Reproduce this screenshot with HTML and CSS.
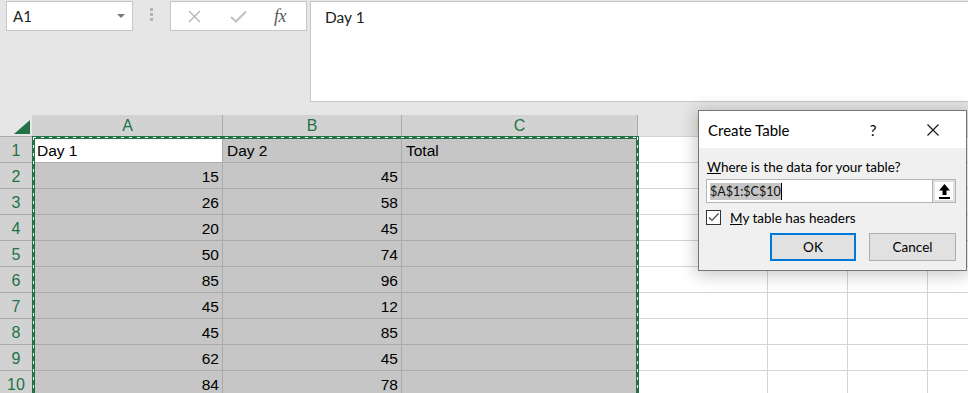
FILE: index.html
```html
<!DOCTYPE html>
<html>
<head>
<meta charset="utf-8">
<link rel="stylesheet" href="styles.css">
</head>
<body>
<div class="app">
  <div class="topbar">
    <div class="namebox"><span class="nb-text">A1</span><span class="dd"></span></div>
    <div class="grip"><i></i><i></i><i></i></div>
    <div class="fxbox">
      <svg class="ico-x" width="13" height="13" viewBox="0 0 13 13"><path d="M1 1L12 12M12 1L1 12" stroke="#b4b4b4" stroke-width="1.3" fill="none"/></svg>
      <svg class="ico-ok" width="17" height="13" viewBox="0 0 17 13"><path d="M1 7L6 11.5L16 1.5" stroke="#c2c2c2" stroke-width="2.2" fill="none"/></svg>
      <span class="fx">fx</span>
    </div>
    <div class="formula">Day 1</div>
  </div>

  <div class="sheet">
    <div class="corner"></div>
    <div class="ch s">A</div><div class="ch s">B</div><div class="ch s">C</div><div class="ch">D</div><div class="ch">E</div><div class="ch">F</div><div class="ch"></div><div class="ch"></div>

    <div class="rh">1</div><div class="c a">Day 1</div><div class="c s">Day 2</div><div class="c s">Total</div><div class="c"></div><div class="c"></div><div class="c"></div><div class="c"></div><div class="c"></div>
    <div class="rh">2</div><div class="c s n">15</div><div class="c s n">45</div><div class="c s"></div><div class="c"></div><div class="c"></div><div class="c"></div><div class="c"></div><div class="c"></div>
    <div class="rh">3</div><div class="c s n">26</div><div class="c s n">58</div><div class="c s"></div><div class="c"></div><div class="c"></div><div class="c"></div><div class="c"></div><div class="c"></div>
    <div class="rh">4</div><div class="c s n">20</div><div class="c s n">45</div><div class="c s"></div><div class="c"></div><div class="c"></div><div class="c"></div><div class="c"></div><div class="c"></div>
    <div class="rh">5</div><div class="c s n">50</div><div class="c s n">74</div><div class="c s"></div><div class="c"></div><div class="c"></div><div class="c"></div><div class="c"></div><div class="c"></div>
    <div class="rh">6</div><div class="c s n">85</div><div class="c s n">96</div><div class="c s"></div><div class="c"></div><div class="c"></div><div class="c"></div><div class="c"></div><div class="c"></div>
    <div class="rh">7</div><div class="c s n">45</div><div class="c s n">12</div><div class="c s"></div><div class="c"></div><div class="c"></div><div class="c"></div><div class="c"></div><div class="c"></div>
    <div class="rh">8</div><div class="c s n">45</div><div class="c s n">85</div><div class="c s"></div><div class="c"></div><div class="c"></div><div class="c"></div><div class="c"></div><div class="c"></div>
    <div class="rh">9</div><div class="c s n">62</div><div class="c s n">45</div><div class="c s"></div><div class="c"></div><div class="c"></div><div class="c"></div><div class="c"></div><div class="c"></div>
    <div class="rh">10</div><div class="c s n">84</div><div class="c s n">78</div><div class="c s"></div><div class="c"></div><div class="c"></div><div class="c"></div><div class="c"></div><div class="c"></div>

    <div class="marquee"></div>
  </div>

  <div class="dialog">
    <div class="dlg-title">
      <span class="dlg-name">Create Table</span>
      <span class="dlg-help">?</span>
      <span class="dlg-close"><svg width="12" height="12" viewBox="0 0 12 12"><path d="M0.5 0.5L11.5 11.5M11.5 0.5L0.5 11.5" stroke="#111" stroke-width="1.1" fill="none"/></svg></span>
    </div>
    <div class="dlg-body">
      <div class="dlg-label"><u>W</u>here is the data for your table?</div>
      <div class="dlg-input">
        <span class="sel">$A$1:$C$10</span><span class="caret"></span>
        <span class="refbtn"><span class="refin"><svg width="11" height="15" viewBox="0 0 11 15"><path d="M5.5 0L11 6.5H7.5V11H3.5V6.5H0Z" fill="#000"/><rect x="0" y="13" width="11" height="2" fill="#000"/></svg></span></span>
      </div>
      <div class="dlg-check">
        <span class="box"><svg width="13" height="13" viewBox="0 0 13 13"><path d="M2 6.5L5 9.5L11.5 2.5" stroke="#444" stroke-width="1.2" fill="none"/></svg></span>
        <span class="chk-label"><u>M</u>y table has headers</span>
      </div>
      <div class="dlg-buttons">
        <div class="btn primary">OK</div>
        <div class="btn">Cancel</div>
      </div>
    </div>
  </div>
</div>
</body>
</html>
```

FILE: styles.css
```css
* { box-sizing: border-box; }
html, body { margin: 0; padding: 0; }
body {
  width: 968px;
  height: 393px;
  overflow: hidden;
  background: #e6e6e6;
  font-family: Lato, "Noto Sans", sans-serif;
}
.app { position: relative; width: 968px; height: 393px; overflow: hidden; }

/* ---------- top bar ---------- */
.topbar {
  display: flex;
  align-items: flex-start;
  height: 115px;
  padding-top: 1px;
}
.namebox {
  margin-left: 6px;
  width: 127px;
  height: 30px;
  background: #fff;
  border: 1px solid #c6c6c6;
  display: flex;
  align-items: center;
  padding: 0 7px 0 6px;
  font-size: 15px;
  color: #222;
}
.dd {
  margin-left: auto;
  width: 0; height: 0;
  border-left: 4px solid transparent;
  border-right: 4px solid transparent;
  border-top: 4px solid #7a7a7a;
}
.grip {
  width: 37px;
  display: flex;
  flex-direction: column;
  align-items: center;
  gap: 2px;
  padding-top: 7px;
}
.grip i { display: block; width: 3px; height: 3px; background: #b3b3b3; }
.fxbox {
  width: 137px;
  height: 30px;
  background: #fff;
  border: 1px solid #c6c6c6;
  display: flex;
  align-items: center;
  padding-left: 17px;
}
.ico-x { margin-right: 29px; }
.ico-ok { margin-right: 27px; }
.fx {
  font-family: "Liberation Serif", "DejaVu Serif", serif;
  font-style: italic;
  font-size: 18px;
  color: #5a5a5a;
  letter-spacing: -0.5px;
}
.formula {
  flex: 1;
  margin-left: 3px;
  margin-right: -2px;
  height: 101px;
  background: #fff;
  border: 1px solid #c6c6c6;
  padding: 5px 14px;
  font-size: 15.5px;
  line-height: 20px;
  color: #222;
}

/* ---------- sheet ---------- */
.sheet {
  position: relative;
  display: grid;
  grid-template-columns: 33px 190px 179px 236px 130px 80px 80px 80px 80px;
  grid-template-rows: 22px repeat(10, 26px);
  font-family: "Liberation Sans", Arial, sans-serif;
  font-size: 15.5px;
}
.corner {
  position: relative;
  background: #e6e6e6;
  border-right: 1px solid #d0d0d0;
  border-bottom: 1px solid #ababab;
}
.corner::after {
  content: "";
  position: absolute;
  left: 14px;
  top: 5px;
  width: 16px;
  height: 14px;
  background: #217346;
  clip-path: polygon(100% 0, 100% 100%, 0 100%);
}
.ch {
  background: #e6e6e6;
  color: #217346;
  text-align: center;
  font-size: 16px;
  line-height: 21px;
  border-right: 1px solid #d4d4d4;
  border-bottom: 1px solid #d4d4d4;
}
.ch.s {
  background: #d2d2d2;
  border-right-color: #ababab;
  border-bottom-color: #ababab;
}
.rh {
  background: #d2d2d2;
  color: #217346;
  text-align: center;
  font-size: 16px;
  padding-top: 3px;
  line-height: 21px;
  border-right: 1px solid #ababab;
  border-bottom: 1px solid #ababab;
}
.c {
  background: #fff;
  border-right: 1px solid #d4d4d4;
  border-bottom: 1px solid #d4d4d4;
  padding: 3px 3px 0 4px;
  line-height: 21px;
  color: #000;
  white-space: nowrap;
}
.c.s { background: #c6c6c6; border-right-color: #ababab; border-bottom-color: #ababab; }
.c.a { background: #fff; border-right-color: #ababab; border-bottom-color: #ababab; }
.c.n { text-align: right; }

.marquee {
  position: absolute;
  left: 32px;
  top: 21px;
  width: 607px;
  height: 320px;
  border: 3px solid #217346;
  pointer-events: none;
}
.marquee::before {
  content: "";
  position: absolute;
  left: -2px; top: -2px; right: -2px; bottom: -2px;
  background:
    repeating-linear-gradient(to right, #fff 0 3px, transparent 3px 8px) left top / 100% 1px no-repeat,
    repeating-linear-gradient(to right, #fff 0 3px, transparent 3px 8px) left bottom / 100% 1px no-repeat,
    repeating-linear-gradient(to bottom, #fff 0 3px, transparent 3px 8px) left top / 1px 100% no-repeat,
    repeating-linear-gradient(to bottom, #fff 0 3px, transparent 3px 8px) right top / 1px 100% no-repeat;
}

/* ---------- dialog ---------- */
.dialog {
  position: absolute;
  left: 698px;
  top: 110px;
  width: 269px;
  height: 161px;
  border: 1px solid #777;
  background: #f0f0f0;
  box-shadow: 0 2px 16px 2px rgba(0, 0, 0, 0.22);
  font-family: Lato, "Noto Sans", sans-serif;
  color: #000;
}
.dlg-title {
  height: 37px;
  background: #fff;
  display: flex;
  align-items: center;
  padding: 0 10px 0 9px;
}
.dlg-name { flex: 1; font-size: 15px; }
.dlg-help { width: 46px; text-align: center; font-size: 15px; margin-right: 14px; }
.dlg-close { width: 46px; display: flex; justify-content: center; }
.dlg-body { padding: 10px 10px 0 7px; }
.dlg-label { font-size: 13.5px; line-height: 18px; margin-left: 1px; }
.dlg-input {
  margin-top: 3px;
  width: 250px;
  height: 24px;
  background: #fff;
  border: 1px solid #b4b4b4;
  display: flex;
  align-items: center;
  padding-left: 3px;
  font-size: 12.5px;
}
.sel { background: #c6c6c6; line-height: 17px; color: #111; }
.caret { width: 1px; height: 17px; background: #000; }
.refbtn {
  margin-left: auto;
  width: 24px;
  height: 100%;
  border-left: 1px solid #b4b4b4;
  border-right: 1px solid #b4b4b4;
  background: #e1e1e1;
  padding: 2px;
  margin-right: -1px;
}
.refin {
  display: flex;
  width: 100%;
  height: 100%;
  background: #fff;
  align-items: center;
  justify-content: center;
}
.dlg-check {
  margin-top: 7px;
  display: flex;
  align-items: center;
  height: 15px;
  font-size: 13.5px;
}
.box {
  width: 15px;
  height: 15px;
  border: 1px solid #333;
  background: #fff;
  display: flex;
  align-items: center;
  justify-content: center;
  margin-right: 9px;
}
.dlg-buttons {
  margin-top: 8px;
  display: flex;
  justify-content: flex-end;
  gap: 13px;
}
.btn {
  width: 87px;
  height: 28px;
  background: #e1e1e1;
  border: 1px solid #adadad;
  font-size: 13.5px;
  display: flex;
  align-items: center;
  justify-content: center;
}
.btn.primary { width: 86px; border: 2px solid #0078d7; }
```
